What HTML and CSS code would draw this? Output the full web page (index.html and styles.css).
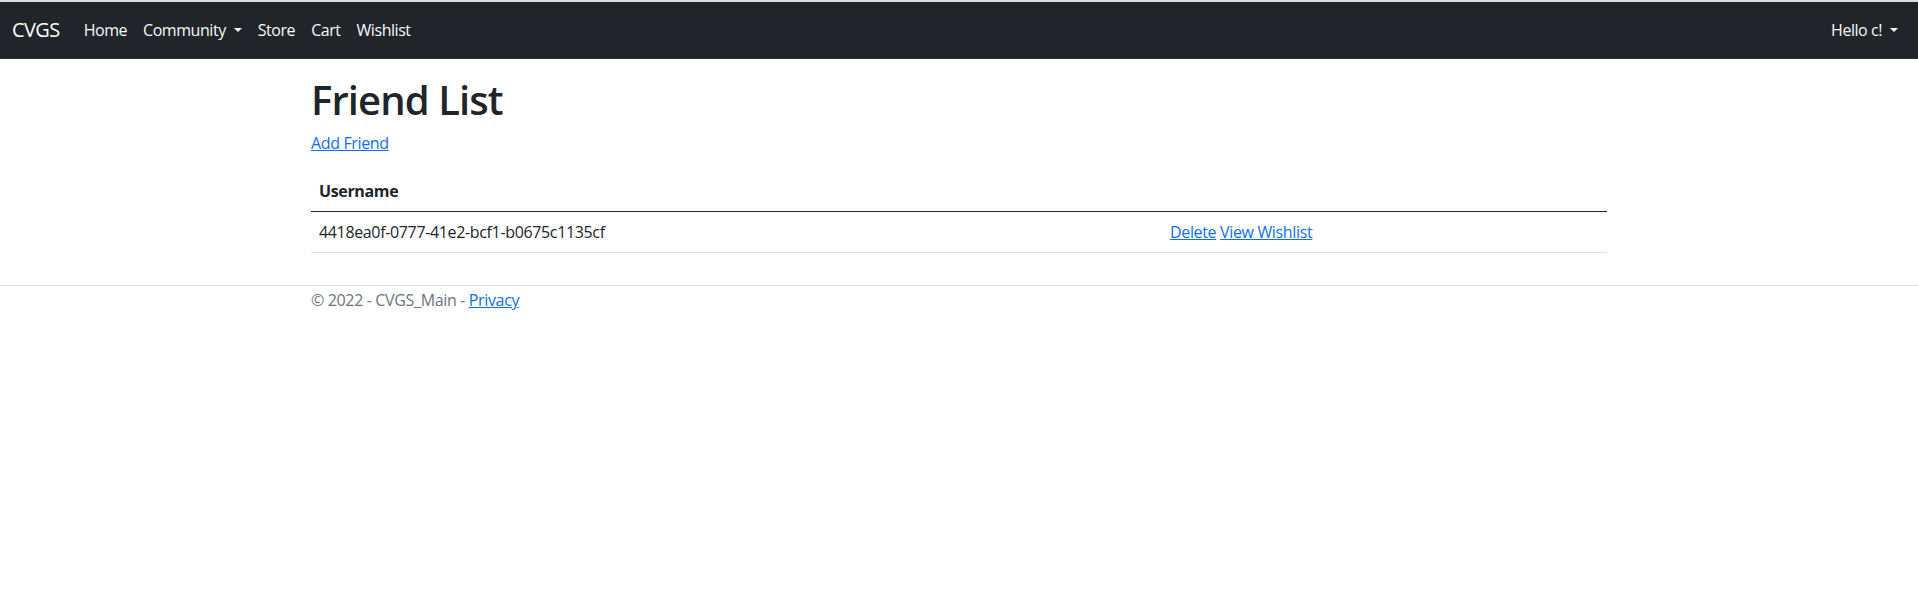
FILE: index.html
```html
<!DOCTYPE html>
<html lang="en">
<head>
<meta charset="utf-8">
<title>Friend List - CVGS_Main</title>
<link rel="stylesheet" href="styles.css">
</head>
<body>
<div class="topstrip"></div>
<header>
  <nav class="navbar">
    <div class="nav-fluid">
      <a class="brand" href="#">CVGS</a>
      <ul class="nav-list">
        <li><a class="nav-link" href="#">Home</a></li>
        <li><a class="nav-link dropdown-toggle" href="#">Community</a></li>
        <li><a class="nav-link" href="#">Store</a></li>
        <li><a class="nav-link" href="#">Cart</a></li>
        <li><a class="nav-link" href="#">Wishlist</a></li>
      </ul>
      <ul class="nav-list nav-right">
        <li><a class="nav-link dropdown-toggle" href="#">Hello c!</a></li>
      </ul>
    </div>
  </nav>
</header>
<div class="container">
  <main class="main">
    <h1 class="title">Friend List</h1>
    <p class="para"><a class="link" href="#">Add Friend</a></p>
    <table class="table">
      <thead>
        <tr>
          <th class="col-user">Username</th>
          <th></th>
        </tr>
      </thead>
      <tbody>
        <tr>
          <td>4418ea0f-0777-41e2-bcf1-b0675c1135cf</td>
          <td><a class="link" href="#">Delete</a> <a class="link" href="#">View Wishlist</a></td>
        </tr>
      </tbody>
    </table>
  </main>
</div>
<footer class="footer">
  <div class="container">
    &copy; 2022 - CVGS_Main - <a class="link" href="#">Privacy</a>
  </div>
</footer>
</body>
</html>
```
FILE: styles.css
```css
*, *::before, *::after { box-sizing: border-box; }
html, body { margin: 0; padding: 0; }
body {
  font-family: "Segoe UI", "Open Sans", "Noto Sans", sans-serif;
  font-size: 16px;
  line-height: 1.5;
  letter-spacing: -0.35px;
  color: #212529;
  background: #fff;
}
.topstrip { height: 2px; background: #dcdcdc; }
.navbar {
  background: #212529;
  border-bottom: 1px solid #2b3035;
  padding: 8px 0;
  margin-bottom: 16px;
}
.nav-fluid {
  display: flex;
  align-items: center;
  padding: 0 12px;
}
.brand {
  color: #fff;
  font-size: 20px;
  line-height: 30px;
  padding: 5px 0;
  margin-right: 16px;
  letter-spacing: -0.6px;
  text-decoration: none;
}
.nav-list {
  display: flex;
  list-style: none;
  margin: 0;
  padding: 0;
}
.nav-right { margin-left: auto; }
.nav-link {
  display: block;
  padding: 8px;
  color: #f8f9fa;
  letter-spacing: -0.45px;
  text-decoration: none;
}
.dropdown-toggle::after {
  content: "";
  display: inline-block;
  margin-left: 8px;
  vertical-align: 4px;
  border-top: 4.5px solid;
  border-right: 4.5px solid transparent;
  border-left: 4.5px solid transparent;
  border-bottom: 0;
}
.container {
  max-width: 1320px;
  margin: 0 auto;
  padding: 0 12px;
}
.main { padding-bottom: 16px; }
.title {
  margin: 0 0 7px;
  padding-top: 1px;
  font-size: 40px;
  font-weight: 600;
  line-height: 1.2;
  letter-spacing: -0.9px;
}
.para { margin: 0 0 16px; }
.link { color: #0d6efd; text-decoration: underline; }
.table {
  width: 100%;
  border-collapse: collapse;
  margin-bottom: 16px;
  color: #212529;
}
.table th, .table td {
  padding: 8px;
  text-align: left;
  vertical-align: bottom;
  border-bottom: 1px solid #dee2e6;
}
.table th { font-weight: 700; }
.table thead th { border-bottom: 1px solid #212529; }
.table td { vertical-align: top; }
.col-user { width: 851px; }
.footer {
  border-top: 1px solid #dee2e6;
  color: #6c757d;
  line-height: 28px;
  white-space: nowrap;
}
```
